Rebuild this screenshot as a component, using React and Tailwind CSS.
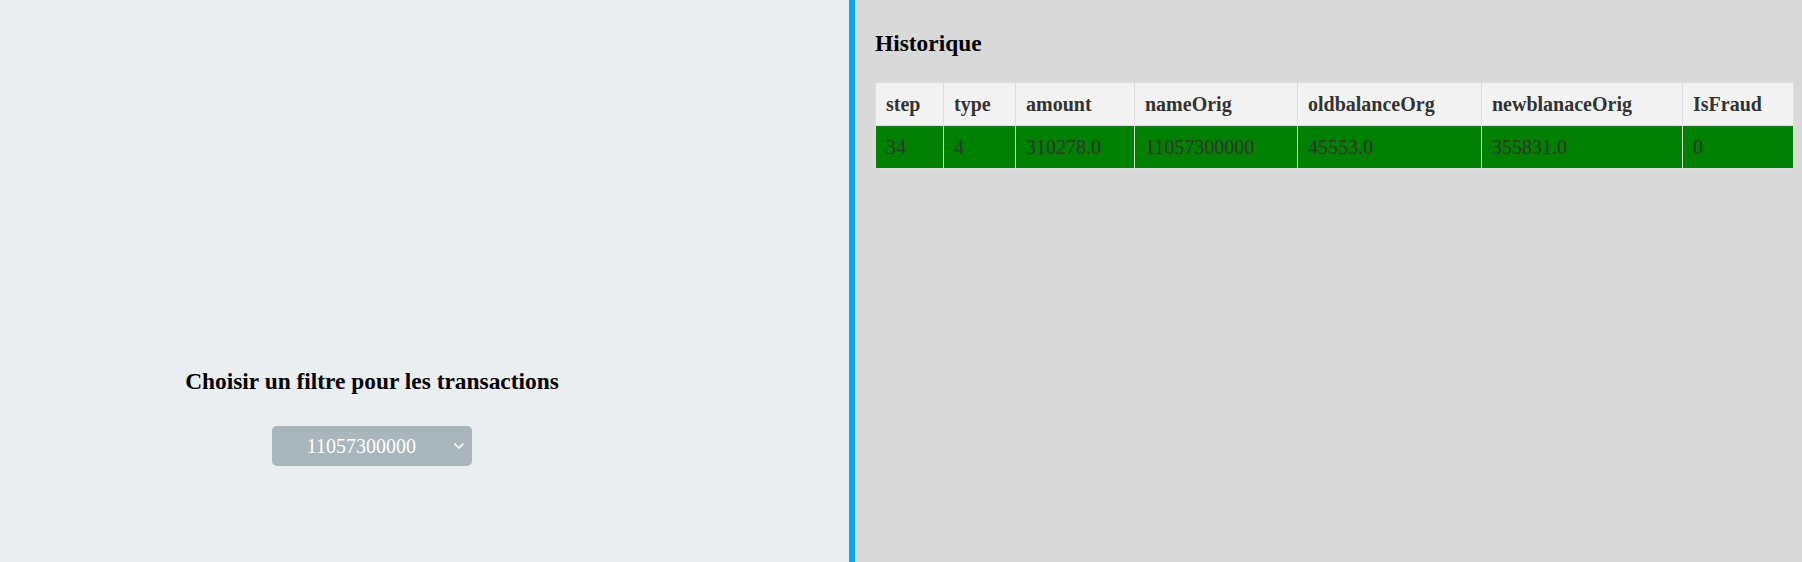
import { ChevronDown } from 'lucide-react';

const COLUMNS = [
  { key: 'step', label: 'step', width: 'w-[68px]' },
  { key: 'type', label: 'type', width: 'w-[72px]' },
  { key: 'amount', label: 'amount', width: 'w-[119px]' },
  { key: 'nameOrig', label: 'nameOrig', width: 'w-[163px]' },
  { key: 'oldbalanceOrg', label: 'oldbalanceOrg', width: 'w-[184px]' },
  { key: 'newblanaceOrig', label: 'newblanaceOrig', width: 'w-[201px]' },
  { key: 'isFraud', label: 'IsFraud', width: 'w-[111px]' },
];

const ROWS = [
  {
    step: '34',
    type: '4',
    amount: '310278.0',
    nameOrig: '11057300000',
    oldbalanceOrg: '45553.0',
    newblanaceOrig: '355831.0',
    isFraud: '0',
  },
];

function FilterPanel() {
  return (
    <div className="flex h-full w-[849px] shrink-0 bg-[#ebeef1]">
      <div className="flex w-[744px] flex-col items-center justify-end pb-[96px]">
        <h3 className="text-[23.4px] font-bold leading-[27px] text-black">
          Choisir un filtre pour les transactions
        </h3>
        <div className="mt-[31px] flex h-[40px] w-[200px] items-center rounded-[5px] bg-[#a9b6bc] text-[20px] text-white">
          <span className="flex-1 text-center">11057300000</span>
          <ChevronDown size={16} strokeWidth={2.5} className="mr-[5px]" />
        </div>
      </div>
    </div>
  );
}

function HistoryPanel() {
  return (
    <div className="h-full flex-1 border-l-[6px] border-[#03a9f4] bg-[#d9d9d9] pl-[20px] pt-[30px]">
      <h3 className="text-[23.4px] font-bold leading-[27px] text-black">Historique</h3>
      <table className="mt-[25px] w-[918px] table-fixed border-collapse text-[20px] text-[#333]">
        <thead>
          <tr className="bg-[#f2f2f2]">
            {COLUMNS.map((col) => (
              <th
                key={col.key}
                className={`${col.width} border border-[#dddddd] px-[10px] py-[10px] text-left font-bold leading-[22px]`}
              >
                {col.label}
              </th>
            ))}
          </tr>
        </thead>
        <tbody>
          {ROWS.map((row, i) => (
            <tr key={i} className="bg-[#008000]">
              {COLUMNS.map((col) => (
                <td
                  key={col.key}
                  className="border border-[#dddddd] px-[10px] py-[10px] leading-[22px]"
                >
                  {row[col.key]}
                </td>
              ))}
            </tr>
          ))}
        </tbody>
      </table>
    </div>
  );
}

export default function App() {
  return (
    <div className="flex h-[562px] w-full font-['Liberation_Serif',serif]">
      <FilterPanel />
      <HistoryPanel />
    </div>
  );
}
